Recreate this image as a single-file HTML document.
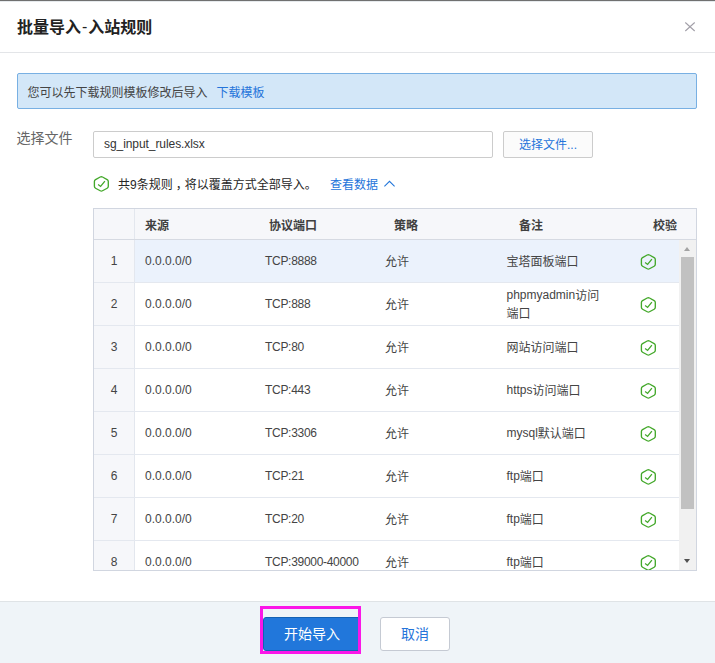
<!DOCTYPE html>
<html lang="zh-CN">
<head>
<meta charset="utf-8">
<title>批量导入-入站规则</title>
<style>
*{box-sizing:border-box;margin:0;padding:0}
html,body{width:715px;height:663px;overflow:hidden;background:#fff}
body{font-family:"Liberation Sans","Noto Sans CJK SC",sans-serif;font-size:12px;color:#333;position:relative}
.abs{position:absolute;white-space:nowrap}
#topline{left:0;top:0;width:715px;height:1px;background:#707070}
#topline2{left:0;top:1px;width:715px;height:1px;background:#e6eaed}
#title{left:17px;top:16px;font-size:16px;line-height:24px;font-weight:bold;color:#222}
#title b{margin:0 0.9px;font-weight:normal;position:relative;top:-1px}
#hdrline{left:0;top:52px;width:715px;height:1px;background:#e3e5e8}
#close{left:684px;top:21px;width:12px;height:12px}
#alert{left:17px;top:73px;width:680px;height:36px;background:#d3e7f8;border:1px solid #78b0e3;border-radius:2px}
#alerttxt{left:27.5px;top:84px;line-height:18px;color:#444}
#alerttxt a{color:#2474da;margin-left:9px;text-decoration:none}
#lbl{left:16.5px;top:128px;font-size:14px;line-height:20px;color:#666}
#inp{left:93px;top:131px;width:400px;height:27px;border:1px solid #ccc;border-radius:2px;background:#fff}
#inptxt{left:104px;top:135px;letter-spacing:-0.07px;line-height:18px;color:#333}
#btnfile{left:503px;top:131px;width:90px;height:27px;border:1px solid #ccc;border-radius:2px;background:#fbfbfb;color:#2474da;text-align:center;line-height:27px}
#okicon{left:93px;top:175px;width:17px;height:18px}
#oktxt{left:118px;top:176px;line-height:18px;color:#262626}
#oktxt em{font-style:normal;position:relative;left:3px}
#viewlnk{left:330px;top:176px;line-height:18px;color:#2474da}
#chev{left:383px;top:179px;width:14px;height:10px}

#tbl{left:93px;top:208px;width:604px;height:363px;border:1px solid #d1d6e0;background:#fff;overflow:hidden}
#thead{left:0;top:0;width:602px;height:30px;background:#f6f7fa}
#theadline{left:0;top:30px;width:602px;height:1px;background:#d6dae2}
.th{top:8px;line-height:18px;font-weight:bold;color:#404040}
#numcol{left:0;top:0;width:40px;height:361px;background:#f6f7fa}
#numline{left:40px;top:0;width:1px;height:361px;background:#e3e7ee}
.row{left:0;width:585px;height:43px}
.row .ln{position:absolute;left:0;top:42px;width:585px;height:1px;background:#e4e8ef}
.row.hl .bg{position:absolute;left:41px;top:0;width:544px;height:42px;background:#ebf2fc}
.row span{position:absolute;white-space:nowrap;line-height:18px;top:13px;color:#444}
.row .n{left:0;width:40px;text-align:center;top:12px}
.row .c1{left:51px;top:12px}
.row .c2{left:171px;top:12px;letter-spacing:-0.3px}
.row .c3{left:291px}
.row .c4{left:412.5px}
.row span i{font-style:normal;position:relative;top:-1px}
.row .c4.two{top:4px;white-space:normal;width:100px}
.row svg{position:absolute;left:546px;top:13px;width:17px;height:18px}
#sbar{left:585px;top:31px;width:17px;height:330px;background:#f1f1f1}
#sthumb{left:2px;top:17px;width:13px;height:252px;background:#c1c1c1}
#sup{left:5px;top:7px;width:0;height:0;border-left:3.5px solid transparent;border-right:3.5px solid transparent;border-bottom:4px solid #a3a3a3}
#sdn{left:5px;top:319px;width:0;height:0;border-left:3.5px solid transparent;border-right:3.5px solid transparent;border-top:4px solid #505050}

#footer{left:0;top:601px;width:715px;height:62px;background:#eff4f8;border-top:1px solid #dfe3e6}
#btnok{left:263px;top:617px;width:98px;height:34px;background:#2177db;border:1px solid #1461b4;border-radius:3px;color:#fff;font-size:14px;line-height:32px;text-align:center}
#btncancel{left:380px;top:617px;width:70px;height:34px;background:#fff;border:1px solid #c5cad3;border-radius:3px;color:#2474da;font-size:14px;line-height:32px;text-align:center}
#hl{left:260px;top:606px;width:101px;height:48px;border:3px solid #fb16e8}
</style>
</head>
<body>
<div class="abs" id="topline"></div>
<div class="abs" id="topline2"></div>
<div class="abs" id="title">批量导入<b>-</b>入站规则</div>
<svg class="abs" id="close" viewBox="0 0 12 12"><path d="M1.3 1.5 L10.7 10 M10.7 1.5 L1.3 10" stroke="#a29fa8" stroke-width="1.1" fill="none"/></svg>
<div class="abs" id="hdrline"></div>

<div class="abs" id="alert"></div>
<div class="abs" id="alerttxt">您可以先下载规则模板修改后导入<a>下载模板</a></div>

<div class="abs" id="lbl">选择文件</div>
<div class="abs" id="inp"></div>
<div class="abs" id="inptxt">sg_input_rules.xlsx</div>
<div class="abs" id="btnfile">选择文件...</div>

<svg class="abs" id="okicon" viewBox="0 0 17 18"><path d="M7.21 2.02 Q8.35 1.40 9.49 2.02 L14.16 4.58 Q15.30 5.20 15.30 6.50 L15.30 11.30 Q15.30 12.60 14.16 13.22 L9.49 15.78 Q8.35 16.40 7.21 15.78 L2.54 13.22 Q1.40 12.60 1.40 11.30 L1.40 6.50 Q1.40 5.20 2.54 4.58 Z" stroke="#43a82a" stroke-width="1.35" fill="none"/><path d="M5.1 9.4 L7.6 11.4 L11.9 6.1" stroke="#43a82a" stroke-width="1.3" fill="none"/></svg>
<div class="abs" id="oktxt">共9条规则<em>，</em>将以覆盖方式全部导入。</div>
<div class="abs" id="viewlnk">查看数据</div>
<svg class="abs" id="chev" viewBox="0 0 14 10"><path d="M1.4 7.4 L6.5 2.3 L11.6 7.4" stroke="#2276da" stroke-width="1.05" fill="none"/></svg>

<div class="abs" id="tbl">
  <div class="abs" id="numcol"></div>
  <div class="abs" id="thead"></div>
  <div class="abs" id="numline"></div>
  <div class="abs" id="theadline"></div>
  <div class="abs th" style="left:51px">来源</div>
  <div class="abs th" style="left:175px">协议端口</div>
  <div class="abs th" style="left:300px">策略</div>
  <div class="abs th" style="left:425px">备注</div>
  <div class="abs th" style="left:559px">校验</div>
  <div class="abs" id="tbody" style="left:0;top:31px;width:585px;height:330px;overflow:hidden">
    <div class="abs row hl" style="top:0"><div class="bg"></div><div class="ln"></div><span class="n">1</span><span class="c1">0.0.0.0/0</span><span class="c2">TCP:8888</span><span class="c3">允许</span><span class="c4">宝塔面板端口</span><svg viewBox="0 0 17 18"><path d="M7.21 2.02 Q8.35 1.40 9.49 2.02 L14.16 4.58 Q15.30 5.20 15.30 6.50 L15.30 11.30 Q15.30 12.60 14.16 13.22 L9.49 15.78 Q8.35 16.40 7.21 15.78 L2.54 13.22 Q1.40 12.60 1.40 11.30 L1.40 6.50 Q1.40 5.20 2.54 4.58 Z" stroke="#43a82a" stroke-width="1.35" fill="none"/><path d="M5.1 9.4 L7.6 11.4 L11.9 6.1" stroke="#43a82a" stroke-width="1.3" fill="none"/></svg></div>
    <div class="abs row" style="top:43px"><div class="ln"></div><span class="n">2</span><span class="c1">0.0.0.0/0</span><span class="c2">TCP:888</span><span class="c3">允许</span><span class="c4 two"><i>phpmyadmin</i>访问<br>端口</span><svg viewBox="0 0 17 18"><path d="M7.21 2.02 Q8.35 1.40 9.49 2.02 L14.16 4.58 Q15.30 5.20 15.30 6.50 L15.30 11.30 Q15.30 12.60 14.16 13.22 L9.49 15.78 Q8.35 16.40 7.21 15.78 L2.54 13.22 Q1.40 12.60 1.40 11.30 L1.40 6.50 Q1.40 5.20 2.54 4.58 Z" stroke="#43a82a" stroke-width="1.35" fill="none"/><path d="M5.1 9.4 L7.6 11.4 L11.9 6.1" stroke="#43a82a" stroke-width="1.3" fill="none"/></svg></div>
    <div class="abs row" style="top:86px"><div class="ln"></div><span class="n">3</span><span class="c1">0.0.0.0/0</span><span class="c2">TCP:80</span><span class="c3">允许</span><span class="c4">网站访问端口</span><svg viewBox="0 0 17 18"><path d="M7.21 2.02 Q8.35 1.40 9.49 2.02 L14.16 4.58 Q15.30 5.20 15.30 6.50 L15.30 11.30 Q15.30 12.60 14.16 13.22 L9.49 15.78 Q8.35 16.40 7.21 15.78 L2.54 13.22 Q1.40 12.60 1.40 11.30 L1.40 6.50 Q1.40 5.20 2.54 4.58 Z" stroke="#43a82a" stroke-width="1.35" fill="none"/><path d="M5.1 9.4 L7.6 11.4 L11.9 6.1" stroke="#43a82a" stroke-width="1.3" fill="none"/></svg></div>
    <div class="abs row" style="top:129px"><div class="ln"></div><span class="n">4</span><span class="c1">0.0.0.0/0</span><span class="c2">TCP:443</span><span class="c3">允许</span><span class="c4"><i>https</i>访问端口</span><svg viewBox="0 0 17 18"><path d="M7.21 2.02 Q8.35 1.40 9.49 2.02 L14.16 4.58 Q15.30 5.20 15.30 6.50 L15.30 11.30 Q15.30 12.60 14.16 13.22 L9.49 15.78 Q8.35 16.40 7.21 15.78 L2.54 13.22 Q1.40 12.60 1.40 11.30 L1.40 6.50 Q1.40 5.20 2.54 4.58 Z" stroke="#43a82a" stroke-width="1.35" fill="none"/><path d="M5.1 9.4 L7.6 11.4 L11.9 6.1" stroke="#43a82a" stroke-width="1.3" fill="none"/></svg></div>
    <div class="abs row" style="top:172px"><div class="ln"></div><span class="n">5</span><span class="c1">0.0.0.0/0</span><span class="c2">TCP:3306</span><span class="c3">允许</span><span class="c4"><i>mysql</i>默认端口</span><svg viewBox="0 0 17 18"><path d="M7.21 2.02 Q8.35 1.40 9.49 2.02 L14.16 4.58 Q15.30 5.20 15.30 6.50 L15.30 11.30 Q15.30 12.60 14.16 13.22 L9.49 15.78 Q8.35 16.40 7.21 15.78 L2.54 13.22 Q1.40 12.60 1.40 11.30 L1.40 6.50 Q1.40 5.20 2.54 4.58 Z" stroke="#43a82a" stroke-width="1.35" fill="none"/><path d="M5.1 9.4 L7.6 11.4 L11.9 6.1" stroke="#43a82a" stroke-width="1.3" fill="none"/></svg></div>
    <div class="abs row" style="top:215px"><div class="ln"></div><span class="n">6</span><span class="c1">0.0.0.0/0</span><span class="c2">TCP:21</span><span class="c3">允许</span><span class="c4"><i>ftp</i>端口</span><svg viewBox="0 0 17 18"><path d="M7.21 2.02 Q8.35 1.40 9.49 2.02 L14.16 4.58 Q15.30 5.20 15.30 6.50 L15.30 11.30 Q15.30 12.60 14.16 13.22 L9.49 15.78 Q8.35 16.40 7.21 15.78 L2.54 13.22 Q1.40 12.60 1.40 11.30 L1.40 6.50 Q1.40 5.20 2.54 4.58 Z" stroke="#43a82a" stroke-width="1.35" fill="none"/><path d="M5.1 9.4 L7.6 11.4 L11.9 6.1" stroke="#43a82a" stroke-width="1.3" fill="none"/></svg></div>
    <div class="abs row" style="top:258px"><div class="ln"></div><span class="n">7</span><span class="c1">0.0.0.0/0</span><span class="c2">TCP:20</span><span class="c3">允许</span><span class="c4"><i>ftp</i>端口</span><svg viewBox="0 0 17 18"><path d="M7.21 2.02 Q8.35 1.40 9.49 2.02 L14.16 4.58 Q15.30 5.20 15.30 6.50 L15.30 11.30 Q15.30 12.60 14.16 13.22 L9.49 15.78 Q8.35 16.40 7.21 15.78 L2.54 13.22 Q1.40 12.60 1.40 11.30 L1.40 6.50 Q1.40 5.20 2.54 4.58 Z" stroke="#43a82a" stroke-width="1.35" fill="none"/><path d="M5.1 9.4 L7.6 11.4 L11.9 6.1" stroke="#43a82a" stroke-width="1.3" fill="none"/></svg></div>
    <div class="abs row" style="top:301px"><div class="ln"></div><span class="n">8</span><span class="c1">0.0.0.0/0</span><span class="c2">TCP:39000-40000</span><span class="c3">允许</span><span class="c4"><i>ftp</i>端口</span><svg viewBox="0 0 17 18"><path d="M7.21 2.02 Q8.35 1.40 9.49 2.02 L14.16 4.58 Q15.30 5.20 15.30 6.50 L15.30 11.30 Q15.30 12.60 14.16 13.22 L9.49 15.78 Q8.35 16.40 7.21 15.78 L2.54 13.22 Q1.40 12.60 1.40 11.30 L1.40 6.50 Q1.40 5.20 2.54 4.58 Z" stroke="#43a82a" stroke-width="1.35" fill="none"/><path d="M5.1 9.4 L7.6 11.4 L11.9 6.1" stroke="#43a82a" stroke-width="1.3" fill="none"/></svg></div>
  </div>
  <div class="abs" id="sbar"><div class="abs" id="sup"></div><div class="abs" id="sthumb"></div><div class="abs" id="sdn"></div></div>
</div>

<div class="abs" id="footer"></div>
<div class="abs" id="btnok">开始导入</div>
<div class="abs" id="btncancel">取消</div>
<div class="abs" id="hl"></div>
</body>
</html>
